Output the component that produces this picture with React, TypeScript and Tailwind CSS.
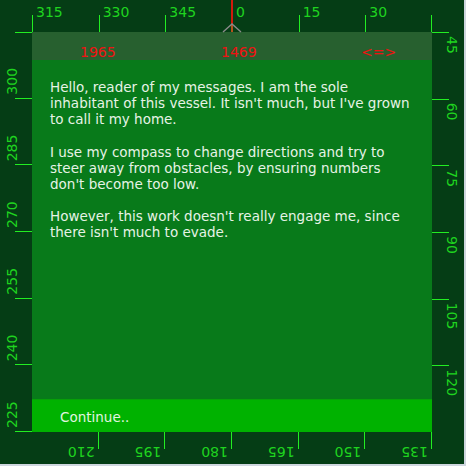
import React from "react";

function Ruler({ labels, endTick }: { labels: string[]; endTick?: boolean }) {
  return (
    <div className="grid h-[32px] w-[400px] shrink-0 grid-cols-6">
      {labels.map((l, i) => (
        <div key={l} className="flex h-[32px]">
          <div className="h-[17px] w-px self-end bg-[#22ee22]" />
          <span className="mt-[4px] self-start pl-[3px] text-[14px] leading-[16px] text-[#1fd41f]">
            {l}
          </span>
          {endTick && i === labels.length - 1 ? (
            <div className="ml-auto h-[17px] w-px self-end bg-[#22ee22]" />
          ) : null}
        </div>
      ))}
    </div>
  );
}

const paragraphs: string[][] = [
  [
    "Hello, reader of my messages. I am the sole",
    "inhabitant of this vessel. It isn't much, but I've grown",
    "to call it my home.",
  ],
  [
    "I use my compass to change directions and try to",
    "steer away from obstacles, by ensuring numbers",
    "don't become too low.",
  ],
  ["However, this work doesn't really engage me, since", "there isn't much to evade."],
];

export default function App() {
  return (
    <div className="h-[466px] w-[466px] bg-[#cfd6df] font-['DejaVu_Sans',sans-serif]">
      <div className="relative grid h-[464px] w-[464px] grid-cols-[32px_400px_32px] grid-rows-[32px_400px_32px] bg-[#053d15]">
        {/* row 1 */}
        <div />
        <div className="flex">
          <Ruler labels={["315", "330", "345", "0", "15", "30"]} endTick />
        </div>
        <div />

        {/* row 2 */}
        <div className="flex items-center justify-center">
          <div className="-rotate-90">
            <Ruler labels={["225", "240", "255", "270", "285", "300"]} endTick />
          </div>
        </div>

        <div className="flex flex-col">
          <div className="flex h-[28px] bg-[#27602f] pt-[12px] text-[14px] leading-[16px] text-[#f01212]">
            <span className="ml-[48px] w-[141px]">1965</span>
            <span className="w-[140px]">1469</span>
            <span>&lt;=&gt;</span>
          </div>
          <div className="flex flex-1 flex-col gap-[16.5px] overflow-hidden bg-[#087a1a] pl-[18px] pt-[19px] text-[13.5px] leading-[16px] text-[#e6f3e6]">
            {paragraphs.map((lines, i) => (
              <p key={i} className="flex flex-col">
                {lines.map((line) => (
                  <span key={line} className="whitespace-nowrap">
                    {line}
                  </span>
                ))}
              </p>
            ))}
          </div>
          <div className="flex h-[33px] items-center border-t border-[#07a007] bg-[#00b200] pl-[28px] pt-[2px] text-[13.5px] leading-[16px] text-[#e0f5e0]">
            Continue..
          </div>
        </div>

        <div className="flex items-center justify-center">
          <div className="rotate-90">
            <Ruler labels={["45", "60", "75", "90", "105", "120"]} />
          </div>
        </div>

        {/* row 3 */}
        <div />
        <div className="flex">
          <div className="rotate-180">
            <Ruler labels={["135", "150", "165", "180", "195", "210"]} />
          </div>
        </div>
        <div />

        {/* heading needle */}
        <svg className="absolute left-[222px] top-0" width="20" height="33" viewBox="0 0 20 33">
          <line x1="10" y1="0" x2="10" y2="24" stroke="#d21a0c" strokeWidth="2" />
          <line x1="10" y1="24" x2="10" y2="32" stroke="#b5521c" strokeWidth="2" />
          <polyline points="1,32 10,24 19,32" fill="none" stroke="#8a8a8a" strokeWidth="1.4" />
        </svg>
      </div>
    </div>
  );
}
